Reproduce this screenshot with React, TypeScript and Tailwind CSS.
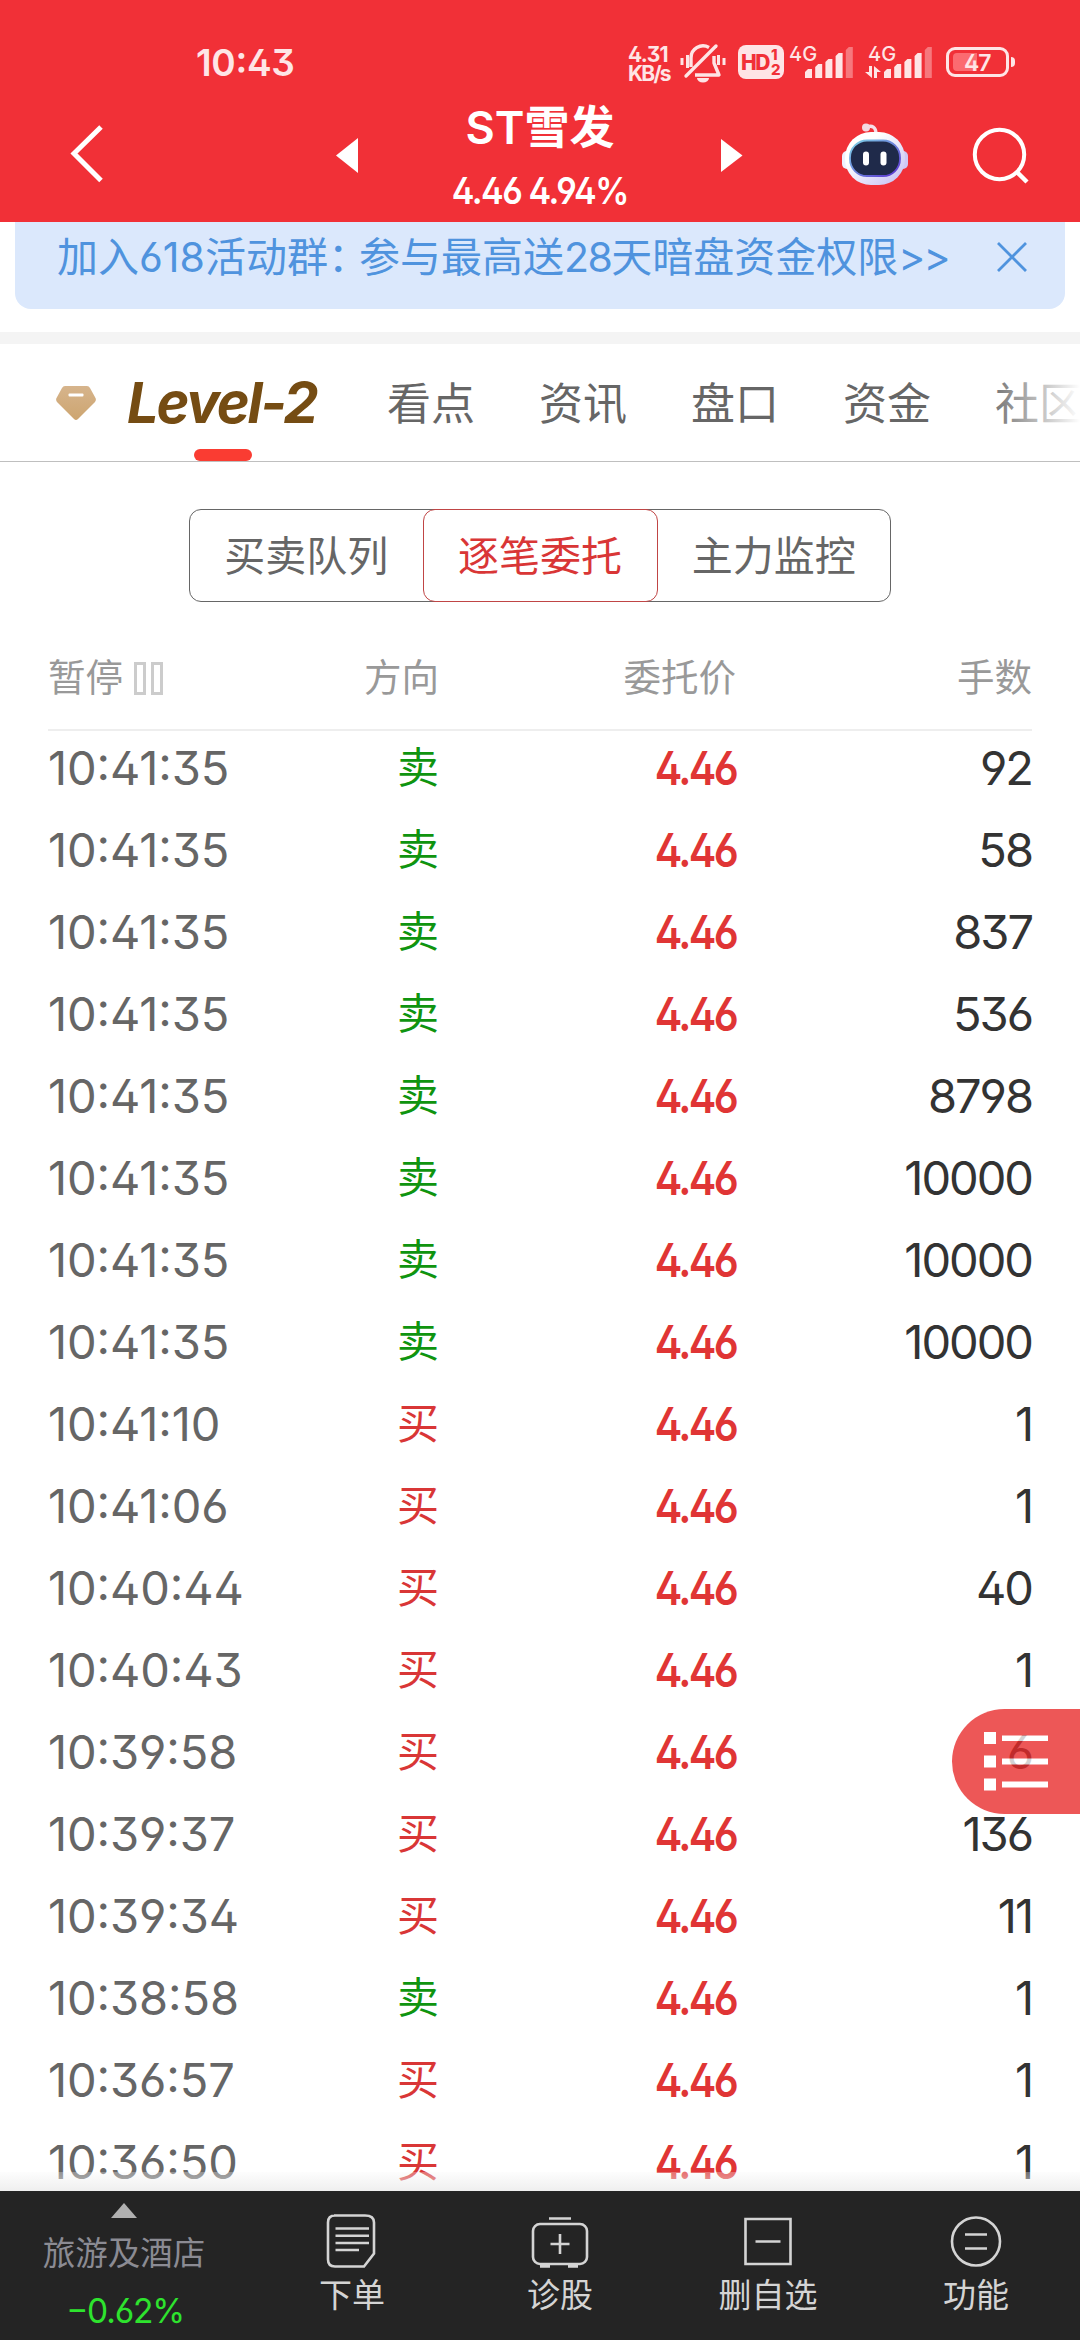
import type { ReactNode } from 'react';

type Order = { time: string; side: '买' | '卖'; price: string; lots: string };

const orders: Order[] = [
  { time: '10:41:35', side: '卖', price: '4.46', lots: '92' },
  { time: '10:41:35', side: '卖', price: '4.46', lots: '58' },
  { time: '10:41:35', side: '卖', price: '4.46', lots: '837' },
  { time: '10:41:35', side: '卖', price: '4.46', lots: '536' },
  { time: '10:41:35', side: '卖', price: '4.46', lots: '8798' },
  { time: '10:41:35', side: '卖', price: '4.46', lots: '10000' },
  { time: '10:41:35', side: '卖', price: '4.46', lots: '10000' },
  { time: '10:41:35', side: '卖', price: '4.46', lots: '10000' },
  { time: '10:41:10', side: '买', price: '4.46', lots: '1' },
  { time: '10:41:06', side: '买', price: '4.46', lots: '1' },
  { time: '10:40:44', side: '买', price: '4.46', lots: '40' },
  { time: '10:40:43', side: '买', price: '4.46', lots: '1' },
  { time: '10:39:58', side: '买', price: '4.46', lots: '6' },
  { time: '10:39:37', side: '买', price: '4.46', lots: '136' },
  { time: '10:39:34', side: '买', price: '4.46', lots: '11' },
  { time: '10:38:58', side: '卖', price: '4.46', lots: '1' },
  { time: '10:36:57', side: '买', price: '4.46', lots: '1' },
  { time: '10:36:50', side: '买', price: '4.46', lots: '1' },
];

const tabs = ['看点', '资讯', '盘口', '资金', '社区'];

function SignalBars() {
  return (
    <svg className="h-[31px] w-[48px]" viewBox="0 0 48 31" fill="#fee5e6">
      <path d="M0 25l3-3h4v9H0z" />
      <path d="M10.2 20l3-3h4v14h-7z" />
      <path d="M20.4 15l3-3h4v19h-7z" />
      <path d="M30.6 9l3-3h4v25h-7z" />
      <path d="M40.8 3l3-3h4v31h-7z" opacity="0.4" />
    </svg>
  );
}

function StatusBar() {
  return (
    <div className="relative h-[95px] text-[#fee5e6]">
      <span className="absolute left-[196px] top-[43px] text-[37px] leading-10 font-semibold tracking-[-0.3px]">10:43</span>
      <div className="absolute left-[628px] top-[45px] text-[21px] leading-[19px] font-bold">
        <div className="tracking-[-0.7px]">4.31</div>
        <div className="tracking-[-1.8px]">KB/s</div>
      </div>
      <svg className="absolute left-[680px] top-[43px] h-10 w-[46px]" viewBox="0 0 46 40" fill="none" stroke="#fee5e6" strokeWidth="3.4">
        <path d="M11 24V15a12 12 0 0 1 18-10.500" />
        <path d="M34 13v7l5 12H15" strokeLinejoin="round" />
        <path d="M6 33L36 3" strokeLinecap="round" />
        <path d="M17 35h12a6 4.500 0 0 1-12 0z" fill="#fee5e6" stroke="none" />
        <path d="M7.500 12v13M2 15v7M38.500 12v10M44 15v7" strokeWidth="3" />
      </svg>
      <div className="absolute left-[738px] top-[45px] flex h-[34px] w-[46px] items-center rounded-lg bg-[#fee5e6] pl-[3px] text-[#f13037]">
        <span className="text-[21px] leading-none font-extrabold tracking-[-1.5px]">HD</span>
        <span className="flex flex-col pl-[2px] text-[15px] leading-[15px] font-extrabold">
          <span>1</span>
          <span>2</span>
        </span>
      </div>
      <span className="absolute left-[789px] top-[44px] text-[20px] leading-5 font-medium">4G</span>
      <div className="absolute left-[805px] top-[47px]"><SignalBars /></div>
      <span className="absolute left-[868px] top-[44px] text-[20px] leading-5 font-medium">4G</span>
      <svg className="absolute left-[865px] top-[66px] h-3 w-4" viewBox="0 0 16 12" fill="#fee5e6">
        <path d="M4 0h3v12L0 6h4zM9 12V0l7 6h-4v6z" />
      </svg>
      <div className="absolute left-[884px] top-[47px]"><SignalBars /></div>
      <div className="absolute left-[946px] top-[47px] h-[30px] w-[63px] rounded-[9px] border-[3px] border-[#fee5e6]">
        <div className="ml-[4px] mt-[3px] h-[18px] w-[24px] rounded-l-[4px] bg-[#fb6b70]" />
      </div>
      <span className="absolute left-[964px] top-[53px] text-[23px] leading-5 font-semibold tracking-[-1px]">47</span>
      <div className="absolute left-[1011px] top-[57px] h-[10px] w-[4px] rounded-r bg-[#fee5e6]" />
    </div>
  );
}

function Robot() {
  return (
    <svg className="h-[62px] w-[68px]" viewBox="0 0 68 62">
      <defs>
        <linearGradient id="shell" x1="0" y1="0" x2="1" y2="1">
          <stop offset="0.3" stopColor="#ffffff" />
          <stop offset="1" stopColor="#c3bcf3" />
        </linearGradient>
        <linearGradient id="rim" x1="0" y1="0" x2="1" y2="1">
          <stop offset="0" stopColor="#7fd6e8" />
          <stop offset="1" stopColor="#5a2fd0" />
        </linearGradient>
      </defs>
      <path d="M26 4c5-2 9 0 9 7" fill="none" stroke="#f6dfe8" strokeWidth="3.400" />
      <circle cx="25" cy="4.500" r="4" fill="#f3d9e2" />
      <rect x="1" y="28" width="10" height="18" rx="5" fill="#eef0ff" />
      <rect x="57" y="28" width="10" height="18" rx="5" fill="#cfc8f6" />
      <rect x="4" y="9" width="60" height="53" rx="26" fill="url(#shell)" />
      <rect x="9" y="17.500" width="50" height="35.500" rx="17" fill="#1f2a4a" stroke="url(#rim)" strokeWidth="1.800" />
      <rect x="22" y="28.500" width="6" height="14" rx="3" fill="#fff" />
      <rect x="39.500" y="28.500" width="6" height="14" rx="3" fill="#fff" />
    </svg>
  );
}

function Header() {
  return (
    <header className="h-[222px] bg-[#f13037] text-white">
      <StatusBar />
      <div className="relative h-[127px]">
        <svg className="absolute left-[68px] top-[28px] h-[62px] w-[38px]" viewBox="0 0 38 62" fill="none" stroke="#fff" strokeWidth="5">
          <path d="M33 4L6 30.500L33 57.500" />
        </svg>
        <svg className="absolute left-[336px] top-[43px] h-[35px] w-[22px]" viewBox="0 0 22 35" fill="#fff">
          <path d="M22 0v35L0 17.500z" />
        </svg>
        <div className="flex flex-col items-center pt-px">
          <h1 className="h-[64px] text-[45px] leading-[64px] font-semibold">ST雪发</h1>
          <p className="h-[62px] scale-x-92 text-[37px] leading-[62px] font-semibold tracking-[-1.6px]">4.46 4.94%</p>
        </div>
        <svg className="absolute left-[721px] top-[43px] h-[35px] w-[22px]" viewBox="0 0 22 35" fill="#fff">
          <path d="M0 1v33L21.500 17.500z" />
        </svg>
        <div className="absolute left-[841px] top-[28px]"><Robot /></div>
        <svg className="absolute left-[972px] top-[32px] h-[58px] w-[58px]" viewBox="0 0 58 58" fill="none" stroke="#fff" strokeWidth="4">
          <circle cx="27.500" cy="27.500" r="24.700" />
          <path d="M44.500 44.500L55 55" strokeWidth="4.500" />
        </svg>
      </div>
    </header>
  );
}

function Banner() {
  return (
    <div className="mx-[15px] flex h-[87px] items-start justify-between rounded-b-2xl bg-[#dbe8fc] pl-[42px] pr-[38px] text-[#4f93de]">
      <p className="text-[41px] leading-[71px] whitespace-nowrap">
        加入618活动群<span className="tracking-[-10px]">：</span>参与最高送<span className="tracking-[-1.5px]">28</span>天暗盘资金权限<span className="tracking-[-2px]">&gt;&gt;</span>
      </p>
      <svg className="mt-[20px] h-[30px] w-[30px]" viewBox="0 0 30 30" fill="none" stroke="currentColor" strokeWidth="2.800">
        <path d="M1 1l28 28M29 1L1 29" />
      </svg>
    </div>
  );
}

function Tabs() {
  return (
    <nav className="relative flex h-[118px] items-center overflow-hidden border-b border-[#bfbfbf] text-[44px] text-[#666]">
      <svg className="ml-[56px] h-[36px] w-[40px] shrink-0" viewBox="0 0 40 36">
        <defs>
          <linearGradient id="gem" x1="0" y1="0" x2="0" y2="1">
            <stop offset="0" stopColor="#d6b48c" />
            <stop offset="1" stopColor="#cda570" />
          </linearGradient>
        </defs>
        <path d="M9 1h22q2 0 3 2l5.500 10q1 2-.5 4L22 34q-2 2-4 0L1 17q-1.500-2-.5-4L6 3q1-2 3-2z" fill="url(#gem)" />
        <rect x="12.500" y="8.500" width="15" height="3" rx="1" fill="#fff" />
      </svg>
      <span className="ml-[31px] w-[229px] shrink-0 text-[56px] leading-none font-bold tracking-[-2.2px] italic text-[#754c13]">Level-2</span>
      <div className="flex shrink-0 gap-16 pt-[3px] pl-[31px]">
        {tabs.map((tab) => (
          <span key={tab} className="whitespace-nowrap">{tab}</span>
        ))}
      </div>
      <div className="absolute bottom-0 left-[194px] h-[12px] w-[58px] rounded-full bg-[#fa3c32]" />
      <div className="absolute right-0 top-0 h-full w-[96px] bg-linear-to-r from-white/0 to-white" />
    </nav>
  );
}

function Segments() {
  return (
    <div className="mx-auto mt-[47px] flex h-[93px] w-[702px] rounded-xl border border-[#666] text-[41px] leading-[93px] text-[#666]">
      <span className="flex-1 text-center">买卖队列</span>
      <span className="-my-px w-[235px] rounded-xl border border-[#c04545] text-center text-[#d93636]">逐笔委托</span>
      <span className="flex-1 text-center">主力监控</span>
    </div>
  );
}

function OrderTable() {
  return (
    <section className="px-12">
      <div className="mt-[26px] grid h-[103px] grid-cols-[200px_191px_297px_296px] items-center border-b-2 border-[#eee] text-[37.5px] text-[#999]">
        <span className="flex items-center gap-[11px]">
          暂停
          <span className="flex gap-[5px]">
            <i className="h-[33px] w-[12px] border-[3px] border-[#ccc]" />
            <i className="h-[33px] w-[12px] border-[3px] border-[#ccc]" />
          </span>
        </span>
        <span className="text-right">方向</span>
        <span className="text-right">委托价</span>
        <span className="text-right">手数</span>
      </div>
      <div className="-mt-1">
        {orders.map((order, i) => (
          <div key={i} className="grid h-[82px] grid-cols-[200px_191px_297px_296px] items-center text-[47px] leading-[82px]">
            <span className="tracking-[-0.1px] text-[#666]">{order.time}</span>
            <span className={order.side === '卖' ? 'text-right text-[42px] text-[#0f940f]' : 'text-right text-[42px] text-[#d93636]'}>
              {order.side}
            </span>
            <span className="origin-right scale-x-88 text-right font-semibold tracking-[-3px] text-[#e03535]">{order.price}</span>
            <span className="text-right tracking-[-2px] text-[#333]">{order.lots}</span>
          </div>
        ))}
      </div>
    </section>
  );
}

function FloatingMenu() {
  return (
    <div className="absolute right-0 top-[1709px] h-[105px] w-[128px] rounded-l-full bg-[#e82929] opacity-78">
      <svg className="ml-[32px] mt-[23px] h-[60px] w-[64px]" viewBox="0 0 64 60" fill="#fff">
        <path d="M0 0h12v12H0zM0 23.500h12v12H0zM0 46.500h12v12H0z" />
        <path d="M18 3.500h46v5.500H18zM18 26.500h46v6H18zM18 49.500h46v6H18z" />
      </svg>
    </div>
  );
}

function BottomItem({ label, children }: { label: string; children: ReactNode }) {
  return (
    <div className="flex w-[208px] flex-col items-center pt-[21px]">
      <svg className="h-[58px] w-[60px]" viewBox="0 0 60 58" fill="none" stroke="#d4d4d4" strokeWidth="2.600">
        {children}
      </svg>
      <span className="text-[33px] leading-[50px] text-[#d4d4d4]">{label}</span>
    </div>
  );
}

function BottomBar() {
  return (
    <footer className="absolute bottom-0 left-0 w-full">
      <div className="h-[19px] bg-linear-to-b from-[#f9f9f9]/30 to-[#e8e8e8]/70" />
      <div className="flex h-[149px] bg-[#242424]">
        <div className="flex w-[248px] flex-col items-center pt-[12px]">
          <svg className="h-[15px] w-[26px]" viewBox="0 0 26 15" fill="#b0b0b0">
            <path d="M13 0l13 15H0z" />
          </svg>
          <span className="mt-[8px] text-[32.5px] leading-[56px] text-[#8b8b93]">旅游及酒店</span>
          <span className="pl-[2px] text-[33.5px] leading-[58px] tracking-[-1.2px] text-[#2ee32e]">−0.62%</span>
        </div>
        <BottomItem label="下单">
          <path d="M12 3.500h31q9 0 9 7v31L42 54.500H13q-7 0-7-7v-37q0-7 7-7z" />
          <path d="M13.500 16.500H47M13.500 23.700H47M13.500 31H47M13.500 38H37" />
        </BottomItem>
        <BottomItem label="诊股">
          <rect x="3" y="12" width="54" height="40" rx="7" />
          <path d="M19 6.500h22M30 22v20M20.500 32h19" />
          <path d="M10 54h10M38 54h10" strokeWidth="3.500" />
        </BottomItem>
        <BottomItem label="删自选">
          <path d="M7.500 7h45v45h-45zM17.500 29.500h25" />
        </BottomItem>
        <BottomItem label="功能">
          <circle cx="30" cy="29.500" r="24" />
          <path d="M19 22.500h22M19 36.500h22" />
        </BottomItem>
      </div>
    </footer>
  );
}

export default function App() {
  return (
    <div className="relative h-[2340px] w-[1080px] overflow-hidden bg-white font-['Inter','Noto_Sans_CJK_SC',sans-serif] [font-feature-settings:'ss01','calt']">
      <Header />
      <Banner />
      <div className="mt-[23px] h-[12px] bg-[#f4f4f4]" />
      <Tabs />
      <Segments />
      <OrderTable />
      <FloatingMenu />
      <BottomBar />
    </div>
  );
}
